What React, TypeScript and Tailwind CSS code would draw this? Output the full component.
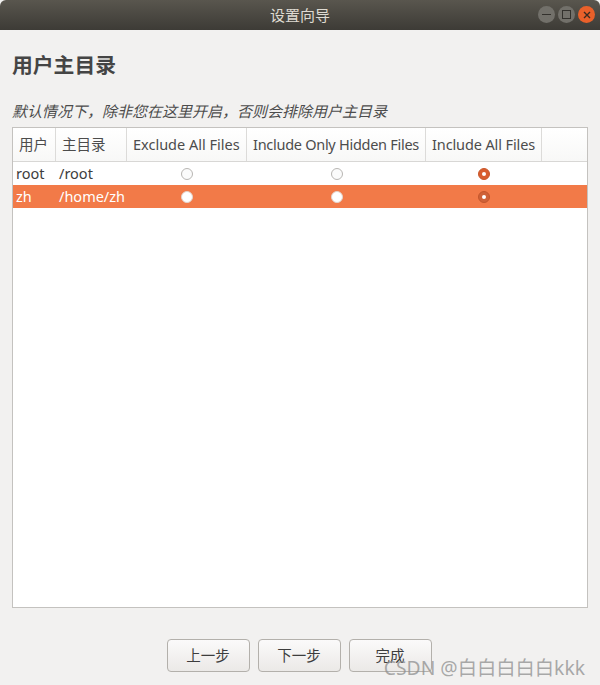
const font = "[font-family:'Noto_Sans','Noto_Sans_CJK_SC',sans-serif]";

function Radio({ on, selected }: { on?: boolean; selected?: boolean }) {
  if (on) {
    return (
      <span
        className={`flex h-[12px] w-[12px] items-center justify-center rounded-full border ${
          selected ? "border-[#c4562c] bg-[#cf6238]" : "border-[#c9572a] bg-[#d85d2f]"
        }`}
      >
        <span className="h-[4px] w-[4px] rounded-full bg-white" />
      </span>
    );
  }
  return (
    <span
      className={`block h-[12px] w-[12px] rounded-full border ${
        selected ? "border-[#e2d4cc] bg-white" : "border-[#b8b6b3] bg-[#fbfbfb]"
      }`}
    />
  );
}

const columns = "grid-cols-[43px_71px_120px_179px_116px_1fr]";

function HeaderCell({ children }: { children?: React.ReactNode }) {
  return (
    <div className="flex items-center border-r border-[#dcdbd9] pl-[6px] text-[14.5px] whitespace-nowrap text-[#4c4c4c] last:border-r-0">
      {children}
    </div>
  );
}

function Row({
  user,
  home,
  selected,
}: {
  user: string;
  home: string;
  selected?: boolean;
}) {
  return (
    <div
      className={`grid h-[23px] ${columns} items-center text-[14.5px] ${
        selected ? "bg-[#f27a48] text-white" : "bg-white text-[#3d3d3d]"
      }`}
    >
      <div className="pl-[3px]">{user}</div>
      <div className="pl-[3px]">{home}</div>
      <div className="flex justify-center">
        <Radio selected={selected} />
      </div>
      <div className="flex justify-center">
        <Radio selected={selected} />
      </div>
      <div className="flex justify-center">
        <Radio on selected={selected} />
      </div>
      <div />
    </div>
  );
}

function Button({ children }: { children: React.ReactNode }) {
  return (
    <button className="h-[33px] w-[83px] rounded-[4px] border border-[#b3b0ab] bg-gradient-to-b from-[#fbfafa] to-[#ebe9e7] text-[14.5px] text-[#3d3d3d]">
      {children}
    </button>
  );
}

export default function App() {
  return (
    <div className={`relative flex h-[685px] w-[600px] flex-col overflow-hidden bg-[#f2f1f0] ${font}`}>
      <header className="relative flex h-[30px] shrink-0 items-center justify-center rounded-t-[6px] bg-gradient-to-b from-[#59564e] to-[#3d3b36] text-[15px] text-[#dfdbd2]">
        设置向导
        <div className="absolute right-[5px] top-[6px] flex gap-[3px]">
          <span className="flex h-[17px] w-[17px] items-center justify-center rounded-full bg-[#72706a]">
            <span className="h-[1px] w-[9px] bg-[#33312d]" />
          </span>
          <span className="flex h-[17px] w-[17px] items-center justify-center rounded-full bg-[#72706a]">
            <span className="h-[9px] w-[9px] border border-[#33312d]" />
          </span>
          <span className="flex h-[17px] w-[17px] items-center justify-center rounded-full bg-[#e9602a]">
            <svg width="8" height="8" viewBox="0 0 8 8">
              <path d="M1 1l6 6M7 1l-6 6" stroke="#3a2a20" strokeWidth="1.4" />
            </svg>
          </span>
        </div>
      </header>

      <main className="flex min-h-0 flex-1 flex-col px-[12px]">
        <h1 className="mt-[20px] h-[30px] text-[20.8px] leading-[30px] font-bold text-[#454545]">用户主目录</h1>
        <p className="mt-[21px] h-[21px] text-[15px] leading-[21px] text-[#4c4c4c] italic">
          默认情况下，除非您在这里开启，否则会排除用户主目录
        </p>
        <div className="mt-[5px] flex h-[481px] flex-col border border-[#c4c2bf] bg-white">
          <div className={`grid h-[34px] ${columns} border-b border-[#d8d7d5] bg-gradient-to-b from-white to-[#f8f8f7]`}>
            <HeaderCell>用户</HeaderCell>
            <HeaderCell>主目录</HeaderCell>
            <HeaderCell>Exclude All Files</HeaderCell>
            <HeaderCell>
              <span className="tracking-[-0.28px]">Include Only Hidden Files</span>
            </HeaderCell>
            <HeaderCell>
              <span className="tracking-[-0.12px]">Include All Files</span>
            </HeaderCell>
            <HeaderCell />
          </div>
          <Row user="root" home="/root" />
          <Row user="zh" home="/home/zh" selected />
        </div>
        <div className="mt-[31px] flex justify-center gap-[8px] pr-[2px]">
          <Button>上一步</Button>
          <Button>下一步</Button>
          <Button>完成</Button>
        </div>
      </main>

      <div className="absolute right-[15px] top-[654px] text-[19.3px] leading-[27px] whitespace-nowrap text-[#8f8f8f]/75">
        CSDN @白白白白白kkk
      </div>
    </div>
  );
}
